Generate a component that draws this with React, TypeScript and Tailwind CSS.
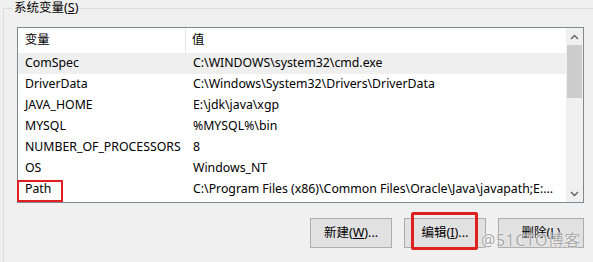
import React from "react";

const rows: [string, string][] = [
  ["ComSpec", "C:\\WINDOWS\\system32\\cmd.exe"],
  ["DriverData", "C:\\Windows\\System32\\Drivers\\DriverData"],
  ["JAVA_HOME", "E:\\jdk\\java\\xgp"],
  ["MYSQL", "%MYSQL%\\bin"],
  ["NUMBER_OF_PROCESSORS", "8"],
  ["OS", "Windows_NT"],
  ["Path", "C:\\Program Files (x86)\\Common Files\\Oracle\\Java\\javapath;E:..."],
];

const font = { fontFamily: '"Noto Sans", "Noto Sans CJK SC", sans-serif' };

const Btn = ({ label, k, tail }: { label: string; k: string; tail: string }) => (
  <button className="w-[82px] h-[30px] bg-[#e1e1e1] border border-[#adadad] text-[12.5px] text-black flex items-center justify-center">
    {label}(<span className="underline">{k}</span>){tail}
  </button>
);

export default function App() {
  return (
    <div
      className="relative w-[593px] h-[262px] bg-[#f0f0f0] overflow-hidden text-[12.3px] text-black"
      style={font}
    >
      <div className="relative ml-[3px] mt-[8px] h-[260px] border-l border-t border-[#dcdcdc] pl-[13px] pt-[18px]">
        <span className="absolute left-[8px] top-[-11px] bg-[#f0f0f0] px-[2px] leading-[20px] text-[12.5px]">
          系统变量(<span className="underline">S</span>)
        </span>

        <div className="w-[567px] h-[176px] bg-white border border-[#828790] flex">
          <div className="flex-1 flex flex-col overflow-hidden">
            <div className="h-[25px] flex items-center">
              <div className="w-[168px] pl-[7px] h-full flex items-center border-r border-[#e5e5e5]">
                变量
              </div>
              <div className="pl-[6px]">值</div>
            </div>
            {rows.map(([name, value], i) => (
              <div
                key={name}
                className={`h-[21px] flex items-center ${i === 0 ? "bg-[#efefef]" : ""}`}
              >
                <div className="w-[168px] shrink-0 pl-[7px] whitespace-nowrap overflow-hidden">{name}</div>
                <div className="pl-[7px] whitespace-nowrap">{value}</div>
              </div>
            ))}
          </div>
          <div className="w-[17px] bg-[#f0f0f0] flex flex-col items-center">
            <div className="h-[17px] flex items-center justify-center">
              <svg width="9" height="6" viewBox="0 0 9 6">
                <path d="M1 5 L4.5 1.5 L8 5" stroke="#606060" strokeWidth="1.4" fill="none" />
              </svg>
            </div>
            <div className="w-[15px] h-[53px] bg-[#cdcdcd]" />
            <div className="flex-1" />
            <div className="h-[17px] flex items-center justify-center">
              <svg width="9" height="6" viewBox="0 0 9 6">
                <path d="M1 1 L4.5 4.5 L8 1" stroke="#606060" strokeWidth="1.4" fill="none" />
              </svg>
            </div>
          </div>
        </div>

        <div className="flex justify-end gap-[12px] w-[567px] mt-[15px]">
          <Btn label="新建" k="W" tail="..." />
          <Btn label="编辑" k="I" tail="..." />
          <div className="w-[86px] h-[30px] bg-[#e1e1e1] border border-[#adadad] text-[12.5px] flex items-center justify-center">
            删除(<span className="underline">L</span>)
          </div>
        </div>
      </div>

      {/* annotation overlays */}
      <div className="absolute left-[17px] top-[180px] w-[46px] h-[22px] border-2 border-[#e02020]" />
      <div className="absolute left-[411px] top-[212px] w-[67px] h-[38px] border-[3px] border-[#e02020] rounded-[2px]" />
      <div
        className="absolute left-[481px] top-[230px] text-[16px] text-[#a8a8a8] leading-[20px] tracking-[0.5px]"
        style={{ textShadow: "0 0 2px #fff, 0 0 1px #fff" }}
      >
        @51CTO博客
      </div>
    </div>
  );
}
